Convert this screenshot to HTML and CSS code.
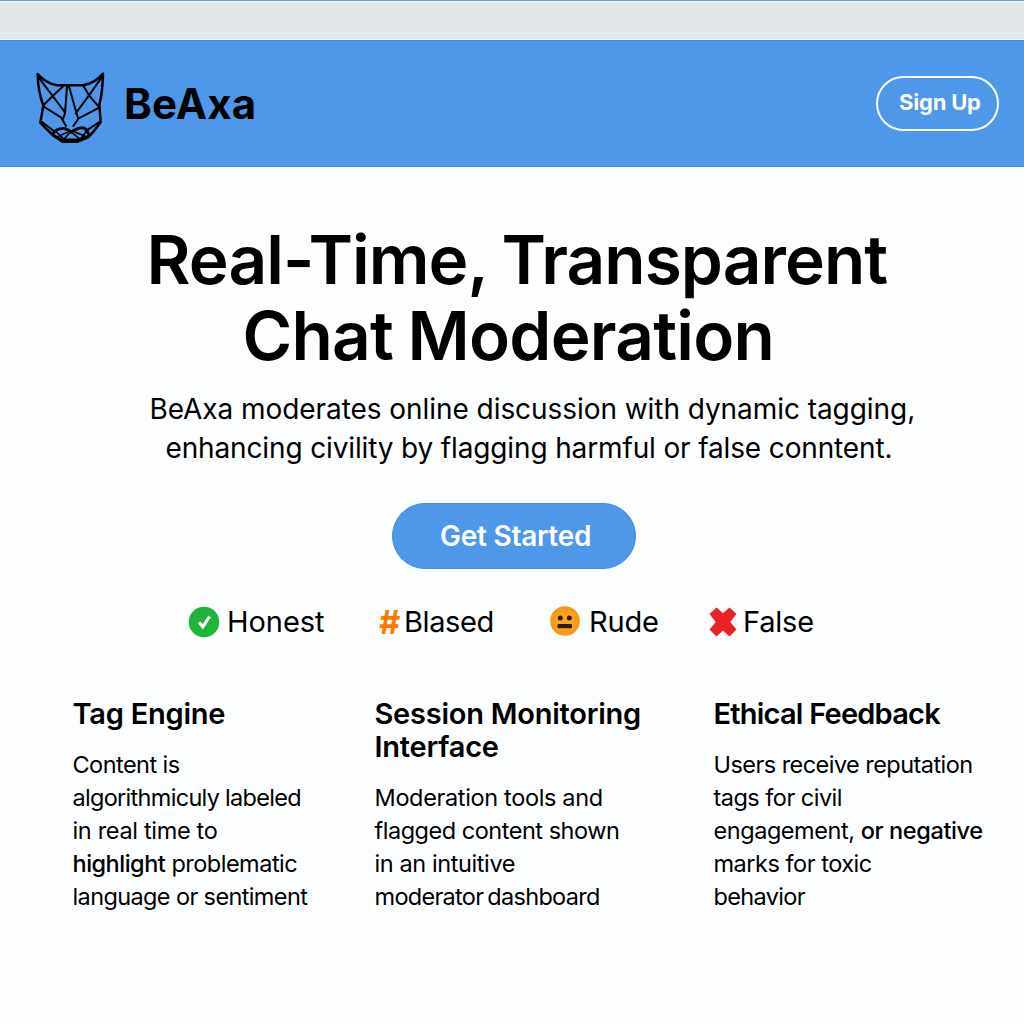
FILE: index.html
```html
<!DOCTYPE html>
<html lang="en">
<head>
<meta charset="utf-8">
<title>BeAxa</title>
<link rel="stylesheet" href="styles.css">
</head>
<body>
<div class="topstrip"></div>
<header class="header">
  <a class="brand">
    <svg class="logo" viewBox="0 0 300 285" fill="none" stroke="#000" stroke-linejoin="round" stroke-linecap="round">
      <path stroke-width="7.5" d="M53 42 Q78 70 111 76 H190 Q226 69 249 41 Q248 94 238 135 L242 186 Q222 215 204 232 L173 245 H128 L97 224 Q76 205 61 188 L70 136 Q54 96 53 42Z"/>
      <path stroke-width="6" d="M58 55 L98 108 L135 157 M128 80 L98 108 L70 136 M141 79 L135 160 L129 177 M147 79 L161 130 L174 174 M190 77 L207 106 L238 142 M245 52 L207 106 L167 160 M70 139 L124 173 L138 198 M239 142 L176 175 L160 198 M63 184 L103 214 M241 184 L200 211"/>
      <path stroke-width="8.5" d="M98 222 Q110 204 132 205 Q146 209 154 217 Q168 205 187 203 Q201 205 207 226 M100 226 L128 243 H173 L204 228"/>
      <path stroke-width="5" d="M106 213 L132 238 L149 218 M151 214 L181 238 L202 210 M116 229 L142 217 M166 217 L194 228 M130 238 H181"/>
    </svg>
    <span class="brand-name">BeAxa</span>
  </a>
  <a class="signup">Sign Up</a>
</header>
<main>
  <section class="hero">
    <h1 class="title"><span class="title-a">Real-Time, Transparent</span><span class="title-b">Chat Moderation</span></h1>
    <p class="lead"><span class="lead-a">BeAxa moderates online discussion with dynamic tagging,</span><span class="lead-b">enhancing civility by flagging harmful or false conntent.</span></p>
    <a class="cta">Get Started</a>
  </section>
  <ul class="tags">
    <li class="tag honest">
      <svg width="32" height="32" viewBox="0 0 32 32"><circle cx="16" cy="16" r="15.3" fill="#20b538"/><path d="M11 16.200l3.800 4.600 6.800-10.300" fill="none" stroke="#fff" stroke-width="3.1"/></svg>
      <span>Honest</span>
    </li>
    <li class="tag biased"><b class="hash">#</b><span>Blased</span></li>
    <li class="tag rude">
      <svg width="30" height="30" viewBox="0 0 30 30"><defs><radialGradient id="face"><stop offset=".5" stop-color="#ffa41f"/><stop offset="1" stop-color="#f8930f"/></radialGradient></defs><circle cx="15" cy="15" r="14.8" fill="url(#face)"/><circle cx="10.3" cy="12" r="2.5" fill="#282006"/><circle cx="19.3" cy="12" r="2.5" fill="#282006"/><rect x="7.5" y="18" width="14.5" height="4.2" rx="1" fill="#282006"/></svg>
      <span>Rude</span>
    </li>
    <li class="tag false">
      <svg width="28" height="30" viewBox="0 0 28 30"><path d="M7.500.5l6.500 5.700L20.500.5 27.500 7l-6.200 8 6.200 7.500-7 7-6.500-5.700-6.500 5.700-7-7L6.700 15 .5 7z" fill="#e92226"/></svg>
      <span>False</span>
    </li>
  </ul>
  <section class="features">
    <article class="feature">
      <h2 class="feature-title">Tag Engine</h2>
      <p class="feature-text"><span class="t1">Content is</span><span class="t2">algorithmiculy labeled</span><span class="t3">in real time to</span><span class="t4"><span class="medium">highlight</span> problematic</span><span class="t5">language or sentiment</span></p>
    </article>
    <article class="feature">
      <h2 class="feature-title">Session Monitoring<br>Interface</h2>
      <p class="feature-text"><span class="t6">Moderation tools and</span><span class="t7">flagged content shown</span><span class="t8">in an intuitive</span><span class="t9">moderator dashboard</span></p>
    </article>
    <article class="feature">
      <h2 class="feature-title tight">Ethical Feedback</h2>
      <p class="feature-text"><span class="t10">Users receive reputation</span><span class="t11">tags for civil</span><span class="t12">engagement, <strong class="strong">or negative</strong></span><span class="t13">marks for toxic</span><span class="t14">behavior</span></p>
    </article>
  </section>
</main>
</body>
</html>
```
FILE: styles.css
```css
* { box-sizing: border-box; }
body {
  margin: 0;
  min-height: 1024px;
  background: #fbfdff;
  color: #000;
  font-family: Inter, "Liberation Sans", sans-serif;
}
h1, h2, p, ul { margin: 0; padding: 0; }

.topstrip {
  height: 40px;
  background: #e3e7ea;
  border-top: 1px solid #6b9cc2;
  box-shadow: inset 0 1px #f8fafb, inset 0 -1px #f8fafb;
}
.header {
  height: 127px;
  padding: 0 25px 1px 20px;
  display: flex;
  align-items: center;
  justify-content: space-between;
  background: #4f97e8;
  border-top: 1px solid #3f8ae4;
  border-bottom: 1px solid #3f8ae4;
}
.brand { display: flex; align-items: center; }
.logo { width: 100px; height: 95px; margin-top: 9px; }
.brand-name {
  margin: 1px 0 0 4px;
  font-size: 42px;
  font-weight: 700;
  line-height: 50px;
  letter-spacing: .2px;
}
.signup {
  width: 123px;
  height: 55px;
  padding-left: 21px;
  border: 2px solid #fff;
  border-radius: 28px;
  color: #fff;
  font-size: 22px;
  font-weight: 700;
  line-height: 49px;
  letter-spacing: -.2px;
}

.title {
  padding-top: 55px;
  font-size: 67.5px;
  font-weight: 600;
  line-height: 76px;
  white-space: nowrap;
}
.title span, .lead span, .feature-text > span { display: block; }
.title-a { padding-left: 146.5px; letter-spacing: -.92px; word-spacing: -1.5px; }
.title-b { padding-left: 242.5px; letter-spacing: -.75px; word-spacing: -2px; }
.lead {
  margin-top: 16px;
  font-size: 28px;
  line-height: 39px;
  white-space: nowrap;
}
.lead-a { padding-left: 149.5px; letter-spacing: -.06px; }
.lead-b { padding-left: 165.5px; letter-spacing: -.14px; }
.cta {
  display: block;
  width: 244px;
  height: 66px;
  margin: 35px 0 0 392px;
  padding-left: 47px;
  border: 1px solid #3f8be5;
  border-radius: 33px;
  background: #4f97e8;
  color: #fff;
  font-size: 28px;
  font-weight: 600;
  line-height: 64px;
  letter-spacing: -.26px;
}

.tags {
  display: flex;
  height: 36px;
  margin-top: 35px;
  padding-left: 188px;
  list-style: none;
}
.tag {
  display: flex;
  align-items: center;
  font-size: 29px;
  line-height: 36px;
  letter-spacing: -.2px;
}
.tag svg { display: block; flex: none; }
.honest svg { margin-top: -1px; }
.honest { width: 191px; gap: 7px; letter-spacing: -.06px; }
.biased { width: 171px; letter-spacing: -.4px; }
.hash { width: 25px; color: #fd7a00; font-size: 33px; letter-spacing: 0; }
.rude { width: 159px; gap: 9px; }
.rude svg { margin-top: -2px; }
.false { gap: 6px; }

.features {
  display: grid;
  grid-template-columns: 302px 339px 1fr;
  margin-top: 57px;
  padding-left: 72.5px;
  white-space: nowrap;
}
.feature-title {
  font-size: 29px;
  font-weight: 600;
  line-height: 33px;
  letter-spacing: -.24px;
}
.tight { letter-spacing: -.78px; }
.feature-text {
  margin-top: 18px;
  font-size: 23.5px;
  line-height: 33px;
}
.medium { font-weight: 450; }
.strong { font-weight: 500; letter-spacing: -.38px; }
.t1 { letter-spacing: -.55px; }
.t2 { letter-spacing: -.7px; }
.t3 { letter-spacing: -.33px; }
.t4 { letter-spacing: -.5px; }
.t5 { letter-spacing: -.62px; }
.t6 { letter-spacing: -.35px; }
.t7 { letter-spacing: -.48px; }
.t8 { letter-spacing: -.4px; }
.t9 { letter-spacing: -.7px; word-spacing: -2px; }
.t10 { letter-spacing: -.55px; }
.t11 { letter-spacing: -.52px; }
.t12 { letter-spacing: -.45px; }
.t13 { letter-spacing: -.48px; }
.t14 { letter-spacing: -.65px; }
```
